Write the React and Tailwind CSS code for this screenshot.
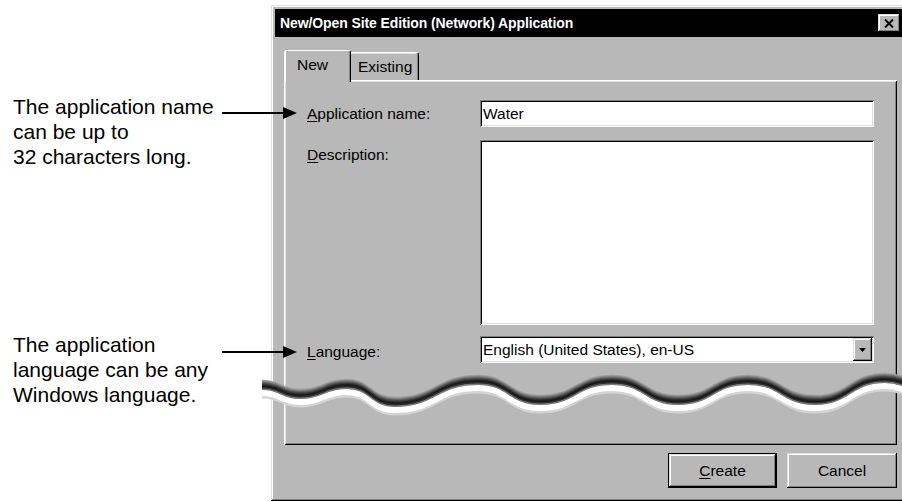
import React from "react";

const pts = [
  [262, 380], [300, 389], [347, 379], [394, 397], [478, 375], [540, 395],
  [612, 375], [678, 395], [748, 375], [815, 395], [885, 373], [930, 383],
];

function wavePath() {
  let d = `M${pts[0][0]} ${pts[0][1]}`;
  for (let i = 1; i < pts.length; i++) {
    const [x0, y0] = pts[i - 1];
    const [x1, y1] = pts[i];
    const mx = (x1 - x0) / 2;
    d += ` C${x0 + mx} ${y0} ${x1 - mx} ${y1} ${x1} ${y1}`;
  }
  return d;
}

const raised =
  "shadow-[inset_-1px_-1px_#000,inset_1px_1px_#dfdfdf,inset_-2px_-2px_#808080,inset_2px_2px_#fff]";
const sunken =
  "shadow-[inset_1px_1px_#808080,inset_-1px_-1px_#fff,inset_2px_2px_#000,inset_-2px_-2px_#dfdfdf]";

function Overlay() {
  const d = wavePath();
  const layers = [
    { o: 17, w: 3, c: "#d4d4d4" },
    { o: 13, w: 6, c: "#ffffff" },
    { o: 1, w: 2.4, c: "#a0a0a0" },
    { o: 2, w: 2.4, c: "#888888" },
    { o: 3, w: 2.4, c: "#6c6c6c" },
    { o: 4, w: 2.4, c: "#525252" },
    { o: 5, w: 2.4, c: "#3a3a3a" },
    { o: 6, w: 2.4, c: "#262626" },
    { o: 7, w: 2.4, c: "#181818" },
    { o: 8, w: 2, c: "#303030" },
    { o: 9.3, w: 1.4, c: "#7a7a7a" },
  ];
  return (
    <svg
      className="absolute left-0 top-0 z-20 pointer-events-none"
      width="902"
      height="502"
      viewBox="0 0 902 502"
    >
      {layers.map((l, i) => (
        <path
          key={i}
          d={d}
          transform={`translate(0,${l.o})`}
          fill="none"
          stroke={l.c}
          strokeWidth={l.w}
        />
      ))}
      <line x1="222" y1="113" x2="285" y2="113" stroke="#000" strokeWidth="2" />
      <polygon points="283,107 297,113 283,119" fill="#000" />
      <line x1="222" y1="352" x2="285" y2="352" stroke="#000" strokeWidth="2" />
      <polygon points="283,346 297,352 283,358" fill="#000" />
    </svg>
  );
}

export default function App() {
  return (
    <div className="w-[902px] h-[502px] bg-white relative overflow-hidden flex text-black font-['Liberation_Sans',Arial,sans-serif]">
      {/* Callouts */}
      <div className="w-[271px] shrink-0 pl-[13px] pt-[94px] text-[21px] leading-[25px] whitespace-nowrap">
        <div>
          <div>The application name</div>
          <div>can be up to</div>
          <div>32 characters long.</div>
        </div>
        <div className="mt-[163px]">
          <div>The application</div>
          <div>language can be any</div>
          <div>Windows language.</div>
        </div>
      </div>

      {/* Dialog */}
      <div className={`w-[635px] shrink-0 self-start mt-[5px] bg-[#b8b8b8] p-[4px] ${raised}`}>
        <div className="h-[28px] bg-black flex items-center justify-between pl-[5px] pr-[2px]">
          <span className="text-white font-bold text-[14px] leading-none tracking-[-0.1px]">
            New/Open Site Edition (Network) Application
          </span>
          <div className={`w-[22px] h-[18px] bg-[#b8b8b8] flex items-center justify-center ${raised}`}>
            <svg width="10" height="9" viewBox="0 0 10 9">
              <path d="M1 0.5 L9 8.5 M9 0.5 L1 8.5" stroke="#000" strokeWidth="2" />
            </svg>
          </div>
        </div>

        <div className="pl-[9px] pr-[5px] pt-[13px] text-[15.5px]">
          {/* Tabs */}
          <div className="flex items-start h-[30px]">
            <div className="relative z-10 w-[67px] h-[32px] bg-[#b8b8b8] border-l-2 border-t border-r border-l-white border-t-white border-r-black rounded-tl-[3px] rounded-tr-[3px] pl-[11px] pt-[5px] leading-[18px] shadow-[inset_-1px_0_#808080]">
              New
            </div>
            <div className="mt-[2px] w-[68px] h-[28px] bg-[#b8b8b8] border-t border-r border-t-white border-r-black rounded-tr-[3px] pl-[7px] pt-[5px] leading-[18px] shadow-[inset_-1px_0_#808080,inset_0_1px_#dfdfdf]">
              Existing
            </div>
          </div>

          {/* Panel */}
          <div className="h-[365px] bg-[#b8b8b8] px-[23px] pt-[20px] shadow-[inset_1px_1px_#fff,inset_-1px_-1px_#000,inset_2px_2px_#dfdfdf,inset_-2px_-2px_#808080]">
            <div className="flex items-center h-[27px]">
              <div className="w-[173px] shrink-0">
                <span className="underline underline-offset-2">A</span>pplication name:
              </div>
              <div className={`flex-1 h-[27px] bg-white flex items-center pl-[3px] ${sunken}`}>
                Water
              </div>
            </div>
            <div className="flex mt-[13px]">
              <div className="w-[173px] shrink-0 pt-[3px]">
                <span className="underline underline-offset-2">D</span>escription:
              </div>
              <div className={`flex-1 h-[185px] bg-white ${sunken}`} />
            </div>
            <div className="flex items-center mt-[11px] h-[27px]">
              <div className="w-[173px] shrink-0 pt-[4px]">
                <span className="underline underline-offset-2">L</span>anguage:
              </div>
              <div className={`flex-1 h-[27px] bg-white flex items-center pl-[3px] pr-[2px] ${sunken}`}>
                <span className="flex-1">English (United States), en-US</span>
                <div className={`w-[19px] h-[23px] bg-[#b8b8b8] flex items-center justify-center ${raised}`}>
                  <svg width="7" height="4" viewBox="0 0 7 4">
                    <path d="M0 0 H7 L3.5 4 Z" fill="#000" />
                  </svg>
                </div>
              </div>
            </div>
          </div>

          {/* Buttons */}
          <div className="flex justify-end gap-[10px] mt-[8px] pb-[9px]">
            <div className="w-[109px] h-[35px] border border-black">
              <div className={`w-full h-full bg-[#b8b8b8] flex items-center justify-center ${raised}`}>
                <span>
                  <span className="underline underline-offset-2">C</span>reate
                </span>
              </div>
            </div>
            <div className={`w-[110px] h-[35px] bg-[#b8b8b8] flex items-center justify-center ${raised}`}>
              Cancel
            </div>
          </div>
        </div>
      </div>

      <Overlay />
    </div>
  );
}
